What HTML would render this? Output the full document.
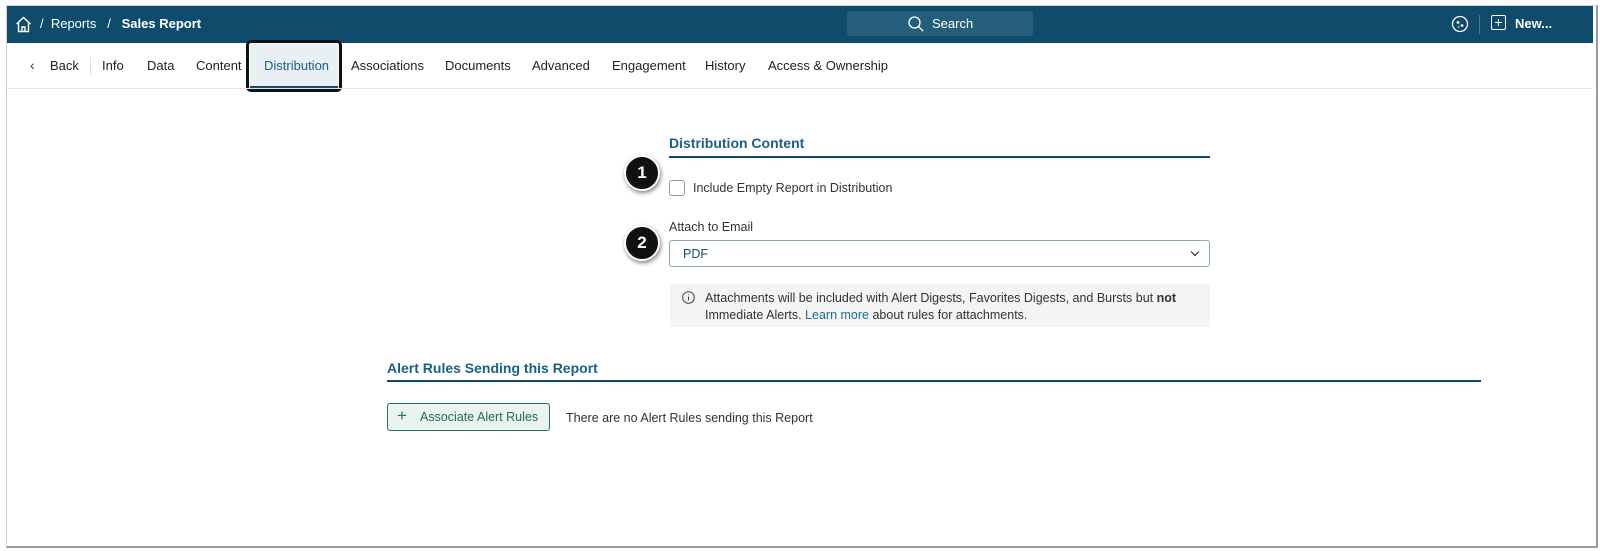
<!DOCTYPE html>
<html><head><meta charset="utf-8"><style>
*{box-sizing:border-box;margin:0;padding:0}
body{width:1600px;height:551px;background:#fff;font-family:"Liberation Sans",sans-serif;position:relative;overflow:hidden;color:#222}
.frame{position:absolute;left:6px;top:5px;width:1592px;height:543px;border:1px solid #cfcfcf;border-right:2px solid #9a9a9a;border-bottom:2px solid #9a9a9a;background:#fff}
.hdr{position:absolute;left:7px;top:6px;width:1586px;height:37px;background:#0f4c6b;color:#fff}
.abs{position:absolute}
.tab{position:absolute;top:58px;font-size:13px;color:#222}
.circle{position:absolute;width:36px;height:36px;border-radius:50%;background:#111;border:2px solid #fff;box-shadow:1px 2px 4px rgba(0,0,0,.5);color:#fff;font-weight:bold;font-size:17px;text-align:center;line-height:32px}
</style></head><body>
<div class="frame"></div>
<div class="hdr">
 <svg class="abs" style="left:8px;top:10px" width="17" height="17" viewBox="0 0 17 17" fill="none" stroke="#fff" stroke-width="1.4"><path d="M1.5 8 L8.5 1.5 L15.5 8"/><path d="M3.5 6.5 V15.5 H13.5 V6.5"/><path d="M7 15.5 V11 H10 V15.5"/></svg>
 <div class="abs" style="left:33px;top:10px;font-size:13px">/&nbsp;&nbsp;Reports&nbsp;&nbsp;&nbsp;/&nbsp;&nbsp;&nbsp;<b>Sales Report</b></div>
 <div class="abs" style="left:840px;top:5px;width:186px;height:25px;background:#245e7a;border-radius:3px"></div>
 <svg class="abs" style="left:900px;top:9px" width="18" height="18" viewBox="0 0 18 18" fill="none" stroke="#fff" stroke-width="1.3"><circle cx="7.5" cy="7.5" r="5.5"/><path d="M11.5 11.5 L16 16"/></svg>
 <div class="abs" style="left:925px;top:10px;font-size:13px">Search</div>
 <svg class="abs" style="left:1444px;top:9px" width="18" height="18" viewBox="0 0 18 18" fill="none" stroke="#fff" stroke-width="1.3"><circle cx="9" cy="9" r="7.5"/><path d="M7 6v3M5.5 7.5h3M11 9v3M9.5 10.5h3M7.5 11.5v1M7 12h1" /></svg>
 <div class="abs" style="left:1472px;top:9px;width:1px;height:19px;background:#4a7a93"></div>
 <div class="abs" style="left:1484px;top:9px;width:15px;height:15px;border:1.3px solid #fff;border-radius:2px;font-size:14px;line-height:12px;text-align:center">+</div>
 <div class="abs" style="left:1508px;top:10px;font-size:13px;font-weight:bold">New...</div>
</div>
<div class="abs" style="left:30px;top:57px;font-size:14px;color:#333">&#8249;</div>
<div class="tab" style="left:50px">Back</div>
<div class="abs" style="left:90px;top:57px;width:1px;height:18px;background:#ddd"></div>
<div class="tab" style="left:102px">Info</div>
<div class="tab" style="left:147px">Data</div>
<div class="tab" style="left:196px">Content</div>
<div class="abs" style="left:246px;top:40px;width:96px;height:52px;border:3px solid #111;border-radius:5px"></div>
<div class="abs" style="left:250px;top:44px;width:88px;height:44px;background:#e8f0f4;border-bottom:2px solid #0f4c6b"></div>
<div class="tab" style="left:264px;color:#1a5f86">Distribution</div>
<div class="tab" style="left:351px">Associations</div>
<div class="tab" style="left:445px">Documents</div>
<div class="tab" style="left:532px">Advanced</div>
<div class="tab" style="left:612px">Engagement</div>
<div class="tab" style="left:705px">History</div>
<div class="tab" style="left:768px">Access &amp; Ownership</div>
<div class="abs" style="left:7px;top:88px;width:1586px;height:1px;background:#e6e6e6"></div>

<div class="abs" style="left:669px;top:135px;font-size:14px;font-weight:bold;color:#1a5f86">Distribution Content</div>
<div class="abs" style="left:669px;top:156px;width:541px;height:1.5px;background:#0f4c6b"></div>
<div class="circle" style="left:624px;top:155px">1</div>
<div class="abs" style="left:669px;top:180px;width:16px;height:16px;border:1px solid #999;border-radius:3px"></div>
<div class="abs" style="left:693px;top:181px;font-size:12.5px;color:#333">Include Empty Report in Distribution</div>
<div class="circle" style="left:624px;top:225px">2</div>
<div class="abs" style="left:669px;top:220px;font-size:12.5px;color:#333">Attach to Email</div>
<div class="abs" style="left:669px;top:240px;width:541px;height:27px;border:1px solid #8aa;border-radius:3px"></div>
<div class="abs" style="left:683px;top:247px;font-size:12.5px;color:#1a4f6e">PDF</div>
<svg class="abs" style="left:1190px;top:250px" width="10" height="7" viewBox="0 0 10 7" fill="none" stroke="#333" stroke-width="1.2"><path d="M1 1.5 L5 5.5 L9 1.5"/></svg>
<div class="abs" style="left:670px;top:284px;width:540px;height:43px;background:#f4f4f4"></div>
<svg class="abs" style="left:682px;top:291px" width="13" height="13" viewBox="0 0 13 13" fill="none" stroke="#444" stroke-width="1"><circle cx="6.5" cy="6.5" r="5.8"/><path d="M6.5 5.5v4M6.5 3.5v.8"/></svg>
<div class="abs" style="left:705px;top:290px;font-size:12.5px;line-height:17px;color:#333;width:500px">Attachments will be included with Alert Digests, Favorites Digests, and Bursts but <b>not</b><br>Immediate Alerts. <span style="color:#1a6e99">Learn more</span> about rules for attachments.</div>

<div class="abs" style="left:387px;top:360px;font-size:14px;font-weight:bold;color:#1a5f86">Alert Rules Sending this Report</div>
<div class="abs" style="left:387px;top:380px;width:1094px;height:1.5px;background:#0f4c6b"></div>
<div class="abs" style="left:387px;top:403px;width:163px;height:28px;border:1px solid #1e7a4e;border-radius:3px;background:#eaf3ef"></div>
<div class="abs" style="left:397px;top:406px;font-size:17px;color:#1e7a4e">+</div>
<div class="abs" style="left:420px;top:410px;font-size:12.5px;color:#1e6e56">Associate Alert Rules</div>
<div class="abs" style="left:566px;top:411px;font-size:12.5px;color:#333">There are no Alert Rules sending this Report</div>
</body></html>
